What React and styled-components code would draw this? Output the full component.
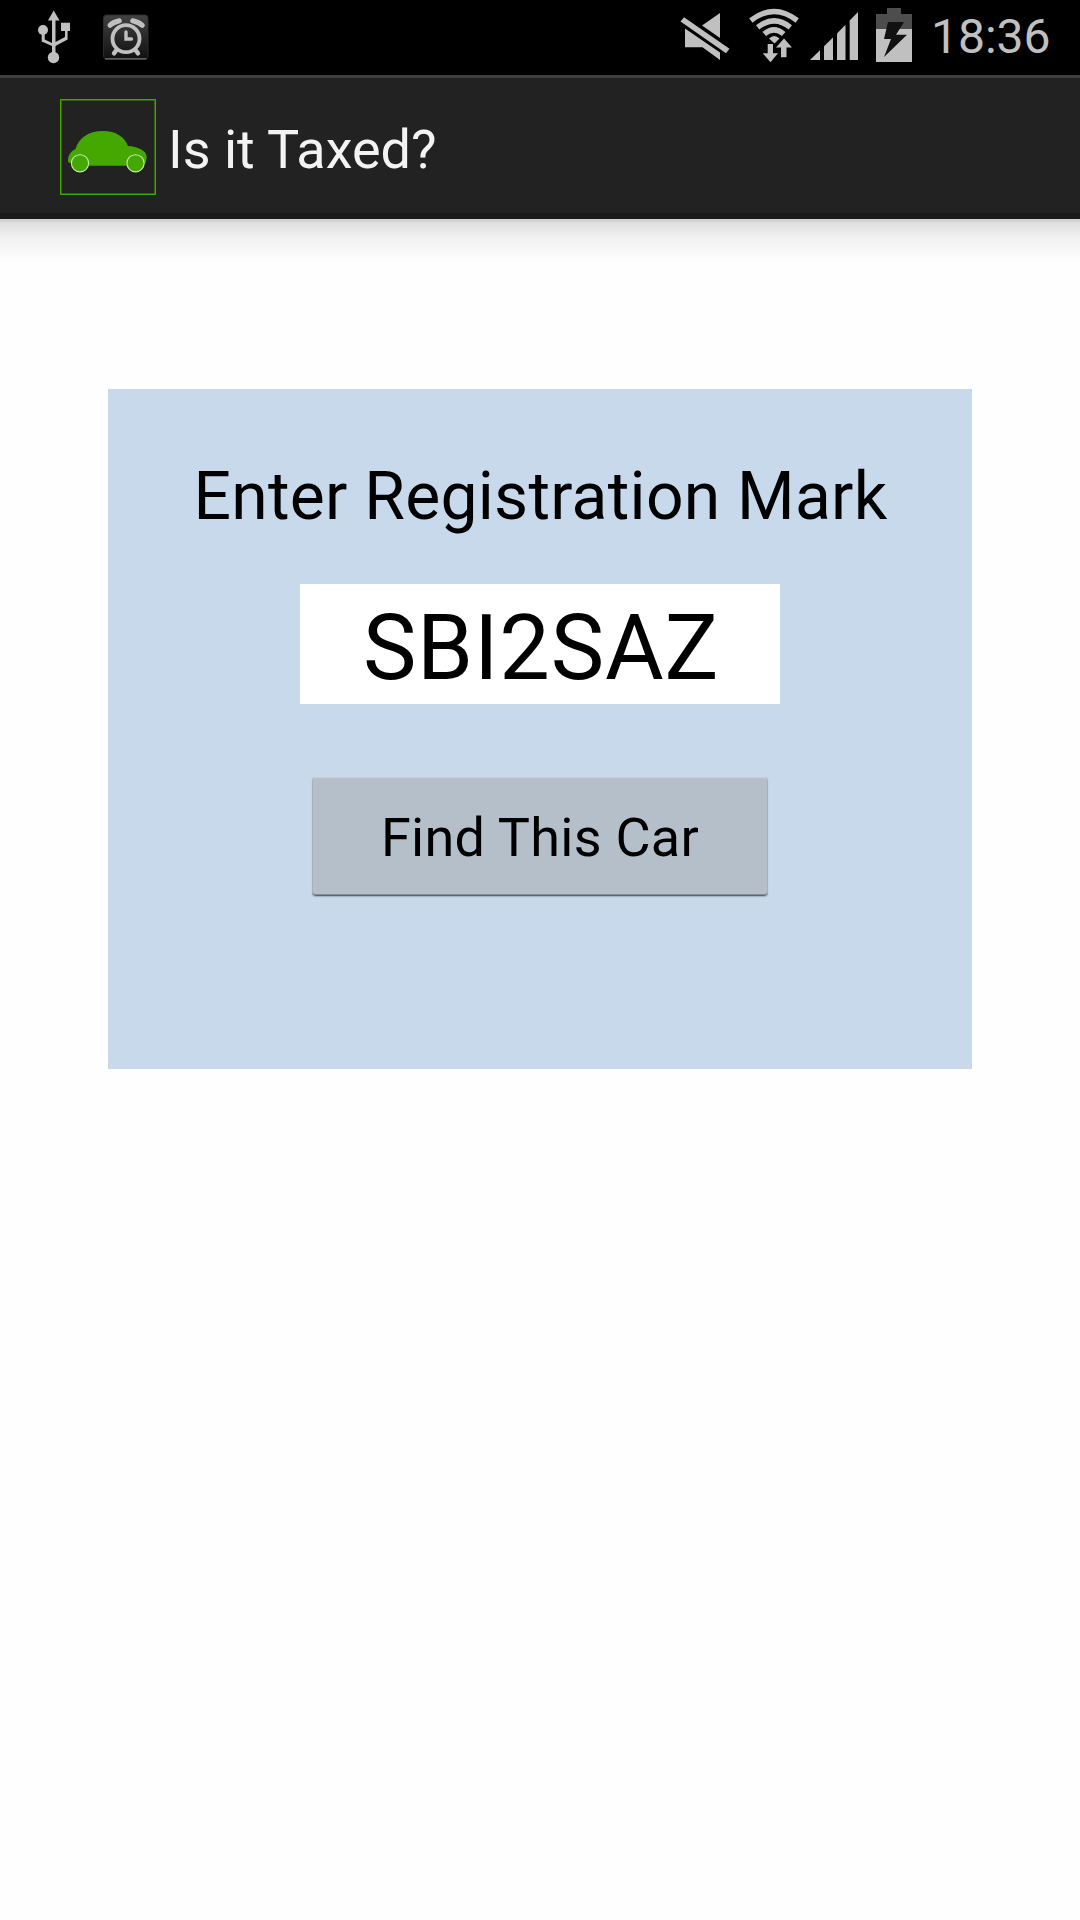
import React from "react";
import styled, { createGlobalStyle } from "styled-components";

const GlobalStyle = createGlobalStyle`
  * { box-sizing: border-box; }
  body { margin: 0; background: #fff; }
`;

const Screen = styled.div`
  width: 1080px;
  height: 1920px;
  display: flex;
  flex-direction: column;
  align-items: stretch;
  background: #fefefe;
  font-family: Roboto, sans-serif;
  overflow: hidden;
`;

const StatusBar = styled.header`
  height: 75px;
  flex: none;
  display: flex;
  justify-content: space-between;
  background: #000;
  color: #c0c0c0;
`;

const StatusGroup = styled.div`
  display: flex;
  align-items: flex-start;
`;

const Glyph = styled.svg`
  display: block;
  flex: none;
  width: ${(p) => p.$w}px;
  height: 75px;
  fill: #c0c0c0;
`;

const Clock = styled.time`
  width: 150px;
  padding-left: 1px;
  font-size: 48px;
  line-height: 73px;
  white-space: nowrap;
`;

const ActionBar = styled.nav`
  height: 144px;
  flex: none;
  display: flex;
  align-items: flex-start;
  gap: 12px;
  padding: 21px 0 0 60px;
  background: #222;
  border-top: 3px solid #3d3d3d;
  border-bottom: 6px solid #1a1a1a;
`;

const AppIcon = styled.svg`
  display: block;
  flex: none;
  width: 96px;
  height: 96px;
`;

const Title = styled.h1`
  margin: 0;
  font-size: 54px;
  font-weight: 400;
  line-height: 101px;
  color: #f3f3f3;
  white-space: nowrap;
`;

const BarShadow = styled.div`
  height: 42px;
  flex: none;
  border-top: 3px solid #d2d2d2;
  background: linear-gradient(#dedede, #f1f1f1 40%, #fefefe);
`;

const Panel = styled.main`
  width: 864px;
  height: 680px;
  margin: 128px auto 0;
  padding-top: 66px;
  flex: none;
  display: flex;
  flex-direction: column;
  align-items: center;
  background: #c8d9eb;
`;

const Prompt = styled.label`
  height: 129px;
  padding-left: 1px;
  font-size: 66px;
  line-height: 84px;
  letter-spacing: 0.25px;
  color: #000;
  white-space: nowrap;
`;

const PlateField = styled.div`
  width: 480px;
  height: 120px;
  flex: none;
  padding: 5px 0 0 2px;
  background: #fff;
  color: #000;
  font-size: 90px;
  line-height: 120px;
  letter-spacing: 0.8px;
  text-align: center;
  white-space: nowrap;
`;

const FindButton = styled.button`
  width: 456px;
  height: 119px;
  margin: 73px 0 0;
  padding: 3px 0 0;
  flex: none;
  border: 0;
  border-radius: 4px;
  background: #b5bfca;
  box-shadow: inset 0 1px 0 #c9cfd6, inset 1px 0 0 #a3afbb, inset -1px 0 0 #a3afbb,
    inset 0 -1px 0 #5f666d, inset 0 -2px 0 #858e97, 0 1px 1px #a3afbd;
  color: #000;
  font-family: inherit;
  font-size: 54px;
  line-height: 116px;
  letter-spacing: 0.25px;
  white-space: nowrap;
`;

const UsbIcon = () => (
  <Glyph $w={80} viewBox="0 0 80 75">
    <path d="M53.7 10.5 59.5 20.5H55.5V42L65 37V31H61V22.7H70V31H67.6V39.5L55.5 46V54H52V46L41.7 41.5V33H44.7V39.5L52 43V20.5H48Z" />
    <circle cx="43" cy="30" r="5" />
    <circle cx="53.5" cy="57.5" r="5.7" />
  </Glyph>
);

const AlarmIcon = () => (
  <Glyph $w={90} viewBox="80 0 90 75">
    <defs>
      <linearGradient id="alarmTile" x1="0" y1="0" x2="0" y2="1">
        <stop offset="0" stopColor="#424242" />
        <stop offset="1" stopColor="#101010" />
      </linearGradient>
    </defs>
    <rect x="103.5" y="15" width="44.5" height="44" rx="3" fill="url(#alarmTile)" stroke="#2c2c2c" />
    <path d="M105 58.8H146.5" stroke="#757575" strokeWidth="1.2" />
    <g fill="none" stroke="#c0c0c0" strokeLinecap="round">
      <circle cx="126" cy="38.7" r="13.5" strokeWidth="3.8" />
      <path d="M126 32V39H131.5" strokeWidth="3.4" />
      <path d="M110 25.3Q113 22.3 119.3 20.8M142.3 25.3Q139 22.3 132.7 20.8" strokeWidth="5" />
      <path d="M116.500 50 114 53.300M135.500 50 138 53.300" strokeWidth="4.4" />
    </g>
  </Glyph>
);

const MuteIcon = () => (
  <Glyph $w={70} viewBox="675 0 70 75">
    <path d="M720 13V38L702 25.5Z" />
    <path d="M685 28.5 720 52.5V60L702.5 47.2H685Z" />
    <path d="M684 17.3 729.5 48.800 726 53.300 680.5 21.5Z" />
  </Glyph>
);

const WifiIcon = () => (
  <Glyph $w={60} viewBox="745 0 60 75">
    <g fill="none" stroke="#c0c0c0" strokeWidth="5.4">
      <path d="M750.8 20.5Q774 2.5 797.2 20.5" />
      <path d="M757.7 27.3Q774 14.5 790.3 27.3" />
      <path d="M764.3 34Q774 25.700 783.700 34" />
    </g>
    <path d="M769 38.5Q774 33.5 779.5 38.5L774.5 43.5Z" />
    <path d="M767.7 44H773V53.3H778L770.5 62.3 762.7 53.3H767.7Z" />
    <path d="M784 38.5 792 47.5H786.5V57.3H781V47.5H776Z" />
  </Glyph>
);

const SignalIcon = () => (
  <Glyph $w={67} viewBox="805 0 67 75">
    <path d="M810 60 820 50.3V60Z" />
    <path d="M824 60V46.3L833 37.5V60Z" />
    <path d="M837 60V33.5L845.5 24.8V60Z" />
    <path d="M849.7 60V20.5L858 12V60Z" />
  </Glyph>
);

const BatteryIcon = () => (
  <Glyph $w={58} viewBox="872 0 58 75">
    <path d="M887 8H901V14H912V29H876V14H887Z" fill="#4d4d4d" />
    <rect x="876" y="29" width="36" height="33" />
    <path d="M888 22H904L896 34.7H907L884 57 891 39H884Z" fill="#111" />
  </Glyph>
);

const CarIcon = () => (
  <AppIcon viewBox="60 99 96 96">
    <rect x="60.5" y="99.5" width="95" height="95" fill="none" stroke="#45a800" />
    <rect x="61.5" y="100.5" width="93" height="93" fill="none" stroke="#32620f" />
    <path
      d="M68.3 162.5C67 156 71 151 75.5 149C79 138 88 131 103 131C116 131 124.5 137 128 146C137 146.5 147 150 146.7 157.5Q146.5 162 144 165.5L138 165.7H82L71 163Z"
      fill="#45a800"
    />
    <circle cx="80" cy="163.3" r="8.6" fill="#45a800" stroke="#c7e8b0" strokeWidth="1.1" />
    <circle cx="135.5" cy="163.3" r="8.6" fill="#45a800" stroke="#c7e8b0" strokeWidth="1.1" />
  </AppIcon>
);

export default function App() {
  return (
    <Screen>
      <GlobalStyle />
      <StatusBar>
        <StatusGroup>
          <UsbIcon />
          <AlarmIcon />
        </StatusGroup>
        <StatusGroup>
          <MuteIcon />
          <WifiIcon />
          <SignalIcon />
          <BatteryIcon />
          <Clock>18:36</Clock>
        </StatusGroup>
      </StatusBar>
      <ActionBar>
        <CarIcon />
        <Title>Is it Taxed?</Title>
      </ActionBar>
      <BarShadow />
      <Panel>
        <Prompt>Enter Registration Mark</Prompt>
        <PlateField>SBI2SAZ</PlateField>
        <FindButton type="button">Find This Car</FindButton>
      </Panel>
    </Screen>
  );
}
